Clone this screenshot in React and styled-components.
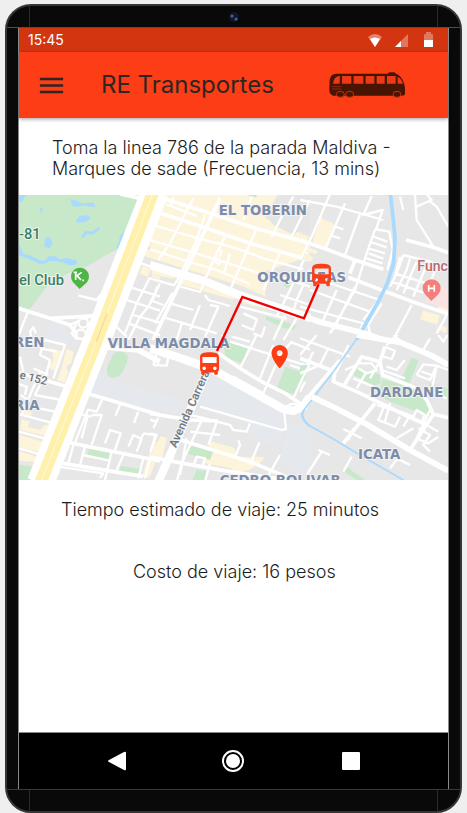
import React from "react";
import styled, { createGlobalStyle } from "styled-components";
import { MdMenu } from "react-icons/md";

const GlobalStyle = createGlobalStyle`
  *, *::before, *::after { box-sizing: border-box; }
  body {
    margin: 0;
    background: #efefef;
    color: #1c1c1c;
    font-family: Inter, "Liberation Sans", sans-serif;
  }
`;

const Phone = styled.div`
  display: flex;
  flex-direction: column;
  min-height: calc(100vh - 4px);
  margin: 4px 5px 0;
  overflow: hidden;
  background: #090909;
  border: 2px solid #363636;
  border-radius: 26px;
`;

const Bezel = styled.div`
  display: grid;
  grid-template-columns: 22px 1fr 22px;
  height: 22px;
  border-${(p) => p.$edge}: 1px solid ${(p) => p.$line};
`;

const BezelCell = styled.div`
  display: flex;
  align-items: center;
  justify-content: center;
  border: 0 solid #2b2b2b;
  border-width: ${(p) => (p.$middle ? "0 1px" : "0")};
`;

const Camera = styled.svg`
  width: 10px;
  height: 10px;
`;

const Screen = styled.div`
  display: flex;
  flex: 1;
  flex-direction: column;
  margin: 0 11px;
  background: #fff;
  border: 0 solid #8a8a8a;
  border-width: 0 1px;
`;

const StatusBar = styled.div`
  display: flex;
  align-items: center;
  justify-content: space-between;
  height: 24px;
  padding: 0 14px 0 9px;
  background: #d43511;
  color: #fff;
  font-size: 14px;
  line-height: 24px;
`;

const StatusIcons = styled.svg`
  width: 68px;
  height: 16px;
`;

const AppBar = styled.header`
  display: flex;
  align-items: center;
  height: 66px;
  padding: 0 43px 0 17px;
  background: #fc3d15;
  box-shadow: 0 1px 4px rgba(0, 0, 0, 0.4);
`;

const MenuButton = styled.button`
  display: flex;
  padding: 0;
  border: 0;
  background: none;
  color: #2f2522;
  font-size: 31px;
`;

const Title = styled.h1`
  flex: 1;
  margin: 0 0 0 34px;
  color: #2c2624;
  font-size: 24px;
  font-weight: 400;
  line-height: 32px;
  white-space: nowrap;
`;

const BusLogo = styled.svg`
  width: 76px;
  height: 26px;
`;

const Content = styled.main`
  flex: 1;
  padding-top: 19px;
`;

const Line = styled.p`
  margin: 0;
  padding: ${(p) => p.$pad};
  font-size: 18px;
  font-weight: 300;
  line-height: 21px;
`;

const Map = styled.svg`
  display: block;
  width: 100%;
  height: auto;
  margin: 16px 0 19px;
  background: #e7e7e7;
`;

const MapLabel = styled.text`
  fill: ${(p) => p.$color || "#7c8ca9"};
  stroke: #f3f3f3;
  stroke-width: 6px;
  stroke-linejoin: round;
  paint-order: stroke;
  font-family: ${(p) => (p.$plain ? "Roboto" : '"DejaVu Sans"')}, sans-serif;
  font-size: ${(p) => p.$size || 40}px;
  font-weight: ${(p) => (p.$plain ? 500 : 700)};
`;

const NavBar = styled.nav`
  display: grid;
  grid-template-columns: repeat(3, 1fr);
  align-items: center;
  height: 57px;
  padding: 0 38px;
  background: #000;
  border-top: 1px solid #8a8a8a;
`;

const NavButton = styled.button`
  display: flex;
  justify-content: center;
  padding: 0;
  border: 0;
  background: none;
`;

const NavIcon = styled.svg`
  width: 24px;
  height: 24px;
  fill: #fff;
`;

const BUS =
  "M4 16c0 .88.39 1.67 1 2.22V20c0 .55.45 1 1 1h1c.55 0 1-.45 1-1v-1h8v1c0 .55.45 1 1 1h1c.55 0 1-.45 1-1v-1.78c.61-.55 1-1.34 1-2.22V6c0-3.5-3.58-4-8-4s-8 .5-8 4v10zm3.5 1c-.83 0-1.5-.67-1.5-1.5S6.67 14 7.5 14s1.5.67 1.5 1.5S8.33 17 7.5 17zm9 0c-.83 0-1.5-.67-1.5-1.5s.67-1.5 1.5-1.5 1.5.67 1.5 1.5-.67 1.5-1.5 1.5zm1.5-6H6V6h12v5z";
const PIN =
  "M12 2C8.13 2 5 5.13 5 9c0 5.25 7 13 7 13s7-7.75 7-13c0-3.87-3.13-7-7-7zm0 9.5c-1.38 0-2.5-1.12-2.5-2.5s1.12-2.5 2.5-2.5 2.5 1.12 2.5 2.5-1.12 2.5-2.5 2.5z";

/* Map sections: origin of each section plus its coloured areas and streets. */
const sections = [
  {
    x: -57,
    y: -15,
    green: "M50 10H360L414 30L354 176L255 232L205 250L180 265L140 290L90 358L50 350Z",
    sand:
      "M475 70L465 96L480 104V70ZM458 108L449 134L480 146V114ZM442 146L434 166L480 182V155ZM432 174L424 195L468 210L476 188ZM428 226L418 252L444 262L452 236ZM462 236L454 260L480 270V240Z",
    slate: "M140 395L180 400L225 440L228 460H135Z",
    water:
      "M212 26L228 32L245 40L280 38L286 50L268 50L256 46L234 50L216 48ZM228 92L238 78L266 76L272 86L256 96L232 98ZM243 140L254 124L276 124L298 110L300 118L278 134L262 132L250 144ZM138 142L150 142L158 160L148 176L132 168ZM120 54L126 52L128 66L122 68ZM56 14H80L72 24L64 38L56 32ZM56 160L62 172L70 192L90 196L118 210L135 212L144 200L164 198L180 208L198 204L214 208L228 210L232 218L222 226L204 226L192 218L168 214L148 212L140 220L118 222L90 208L70 200L56 196ZM374 124L360 138L356 158L348 172L356 174L366 152L374 138Z",
    major: "M360 12L425 26M55 355L150 385L210 405L240 445M150 385L310 376",
    minor:
      "M235 316L290 330L304 312M84 365L62 420L50 450M95 450L90 425L100 412L108 430M270 380L205 406M410 215L480 240M385 290L480 320M365 325L480 362M400 375L480 398M385 400L480 436M450 262L410 340L375 430M480 280L445 350L420 380L385 450M344 405L380 440M230 400L215 430L235 452",
  },
  {
    x: 393,
    y: -15,
    sand:
      "M35 10H385L345 84L480 140V200L345 245L350 290L345 320L280 290L0 205V150L0 130ZM5 235L80 252L75 268L5 254ZM82 262L158 286L150 300L78 280ZM160 288L255 316L252 330L156 304ZM290 316L350 335L345 356L280 340Z",
    green: "M290 10L322 14L318 22L298 18ZM345 378L440 406L430 420L395 412L375 402L348 390ZM405 270L425 290L412 294L400 284Z",
    gray: "M392 10H480V128L448 120L432 136L372 106L352 84Z",
    wide: "M0 225L90 252L160 272L275 318L480 384",
    major: "M30 65L0 130M210 25L0 470M25 22L170 66L320 116L480 160M20 65L150 108L300 160L480 210",
    minor:
      "M10 105L120 138L260 175L340 205L460 238M0 150L110 182L220 215L330 250L345 248M0 178L100 210L200 240L300 282M70 22L62 50M50 44L140 78M130 25L112 60M115 52L95 92L60 160L25 210M165 75L140 150L105 225L82 270M230 130L200 190L160 280M320 115L240 300M305 20L280 90M430 20L395 80L365 140M480 30L425 140M390 190L340 300M480 170L420 300L380 380M480 240L440 330L425 380M210 200L214 184L204 176M205 205A8 8 0 1 0 212 216M240 190L222 248M0 265L72 286L82 270M92 290L150 306L160 285M165 315L175 330L240 348M22 290L10 325L0 340M68 308L15 400M150 345L120 420M180 345L205 350L165 440M60 340L130 360M35 380L200 430M95 400L80 450M270 350L410 386M280 370L320 388L310 420L275 405M345 410L335 440L310 430M405 375L370 450M440 385L400 450M390 315L480 345M370 255L480 290M0 330L40 345",
  },
  {
    x: 843,
    y: -15,
    sand: "M0 130L26 138L20 158L0 150ZM62 78L74 90L100 98L102 112L78 174L40 160L38 150ZM20 170L54 182L48 194L18 184ZM8 190L40 200L34 215L5 205ZM368 360L420 376L412 405L360 388ZM418 340L445 348V370L412 358ZM420 405L440 412V430L415 420Z",
    slate: "M80 70L104 80L100 108L76 98Z",
    rose: "M398 286L445 296V358L398 342L375 335Z",
    wide: "M0 375L60 396L200 432L300 468",
    major: "M145 262L258 305L350 340L445 372M0 150L80 178L165 210L250 238M318 150L400 172L445 188M165 210L150 250",
    minor:
      "M0 30L110 50L250 90M90 12L35 140L0 210M135 40L75 180M180 72L135 195M215 18L190 75L248 60L228 118L268 125L278 180L262 240M225 118L200 190L165 300L90 430M205 175L255 190M210 155L260 172M215 138L262 155M206 190L250 206M200 205L248 220M345 15L350 90L400 170M350 50L395 30L380 12M385 30L410 50L445 110M310 195L390 215L445 238M300 200L285 260L270 290M310 195L290 250M330 205L320 240L290 300M350 215L330 260L310 310M380 225L340 320M410 232L380 300M285 250L410 290M275 275L370 308M60 270L240 330L256 300M30 300L210 365M0 350L190 400L180 420M110 300L70 390M165 290L100 420M240 325L190 390M335 345L290 430L280 450M205 405L245 340M210 430L205 405M440 375L410 430M100 108L130 118M90 135L120 145M300 20L310 60",
    blue: "M271 10L280 90L285 145L281 220L262 280L240 325L170 450",
  },
  {
    x: -57,
    y: 420,
    green: "M340 56C350 45 390 48 383 75C376 100 360 132 338 128C320 126 316 108 324 90ZM268 342L328 354L325 376L260 362ZM362 392L424 403L418 424L357 414ZM55 388L103 396L96 436H50Z",
    sand: "M155 38L190 50L170 110L145 100L145 85L158 80ZM200 40L222 50L215 85L200 95L205 110L195 145L170 136L180 110ZM64 252L90 258L84 275L120 284L134 268L148 270L138 304L60 285ZM57 298L130 320L118 352L57 338ZM57 348L112 364L108 382L57 378ZM466 318L480 322V372L448 362ZM440 376L468 380L448 430L426 424ZM75 225L98 232L92 245L70 238ZM132 115L160 140L136 135Z",
    slate: "M135 10L190 -10L225 40L160 15ZM290 118L480 178V240L258 170Z",
    wide: "M310 35L415 45L480 80",
    major: "M60 114L205 156M258 174L480 240M204 322L480 378M170 382L430 424",
    minor:
      "M55 30L80 20L135 15L195 30L160 130M120 40L170 50M60 65L70 110M130 20L120 60L150 75L135 130M225 70L240 80M50 145L80 155L75 180M120 110L65 240M120 150L105 180L185 195M92 215L165 230M60 238L150 262M57 290L140 312M57 340L120 358M308 190L290 230L264 224L226 320M264 240L245 310M232 235L275 245M275 240L305 240L275 330M360 210L346 242M415 230L402 264M475 248L460 280M315 325L330 285L362 295L345 345M385 335L400 300L425 312L410 350M430 295L465 300L450 370M430 295L420 320M220 330L205 385M255 335L240 390M335 350L315 435M370 360L350 405M430 370L415 430M250 360L325 376M175 395L310 415L300 428M450 370L435 430M100 100L145 120M62 180L90 200",
  },
  {
    x: 393,
    y: 420,
    green: "M222 20L294 34L278 85L225 68ZM406 95L455 112L474 84L465 130L430 178L380 160ZM115 330L190 350L180 375L108 355ZM140 404L170 408L160 440H126Z",
    sand: "M32 302L52 308L36 378L0 362ZM182 318L254 338L260 365L345 366L330 385L300 405L260 415L240 400L160 385ZM60 360L76 364L68 382L55 378Z",
    slate: "M0 168L100 195L80 238L0 210ZM190 115L230 130L330 180L400 225L410 288L200 230L145 210ZM305 265L400 290L375 330L295 305ZM420 258L480 280V400L440 418L385 380Z",
    wide: "M0 40L70 62L150 90L200 110L270 150L400 222L430 228L460 215L480 185M178 95L25 440",
    major: "M205 55L270 100L335 140L400 172L458 210M0 235L120 255L205 258M75 310L210 352L300 380L420 430M0 366L100 385L240 410L410 435",
    minor:
      "M150 215L395 285L408 282L402 225M105 235L240 270L250 285L290 290L300 265M160 245L130 310L95 385L80 440M200 262L175 330M120 290L210 300M0 295L20 300L0 350M20 260L0 254M265 316L270 330L255 365M328 322L300 390M390 360L350 430M130 395L140 365L165 370L155 400M110 310L90 420M180 385L165 440M235 130L250 125L340 175L390 60L425 20M370 30L330 130M300 20L245 5M420 20L480 44M420 90L450 100M480 80L430 190M320 0L290 60L270 100M240 20L480 95M410 215C430 198 450 210 440 218M10 90L50 92L55 65M10 90L18 60M215 0L230 15",
    blue: "M480 208C450 230 450 245 480 275",
  },
  {
    x: 843,
    y: 420,
    green: "M168 100L240 118L242 145L222 152L158 118ZM335 68L356 76L328 145L302 134ZM248 132L330 155L372 175L395 242L340 225L280 205L235 180ZM0 92L25 88L10 118L0 122ZM140 395L195 435H170L126 406ZM385 145L442 160V190L400 180Z",
    slate: "M0 285L44 305L0 378Z",
    wide: "M170 0L300 22L395 62L445 90M35 185L105 218L200 268L330 345L445 408",
    major: "M0 70L105 110L100 140L175 172L290 228L380 270M240 80L248 120L350 160L380 195L400 238L445 248M130 155L185 65L240 80L255 35M400 238L330 345M225 205L130 325M0 215L120 75",
    minor:
      "M0 10L150 65M50 0L0 60M85 40L60 90M40 50L20 90M145 30L110 110M255 35L285 48L275 72L250 65M260 95L290 105L315 75M245 105L315 130M240 78L210 130M170 85L215 85L230 105L200 115L175 100M135 105L170 90M160 130L220 155L210 180M170 160L200 110M350 120L390 135L410 92L370 88L350 120M410 92L445 105M410 92L395 165L380 175M365 110L395 120M230 210L330 240L310 275M250 220L235 255L285 275L300 245M270 205L255 260M300 230L340 245L350 225L375 240L365 260M340 280L290 310M355 280L390 300L370 330L390 350M380 270L415 290M395 215L350 310L385 325L415 305M440 190L395 170M130 282L185 310M160 280L145 315M300 360L270 400M55 345L90 360M65 350L20 420M155 365L130 410M290 370L330 390M0 115L50 95M15 140L0 170M305 20L280 0M390 10L370 45M415 0L430 20L442 0M260 30L300 -10",
    blue: "M175 5L100 110L8 230Q0 250 25 270L100 312L180 360L310 435",
  },
];

const labels = [
  { text: "EL TOBERIN", x: 599, y: 61 },
  { text: "ORQUIDEAS", x: 715, y: 262 },
  { text: "VILLA MAGDALA", x: 266, y: 460 },
  { text: "REN", x: -15, y: 456 },
  { text: "RIA", x: -15, y: 645 },
  { text: "DARDANE", x: 1053, y: 607 },
  { text: "ICATA", x: 1017, y: 792 },
  { text: "CEDRO BOLIVAR", x: 602, y: 870 },
];

function RouteMap() {
  return (
    <Map viewBox="0 0 1287 855" role="img" aria-label="Mapa de la ruta">
      {sections.map((s, i) => (
        <svg key={i} x={s.x} y={s.y} width={i % 3 === 2 ? 501 : 482} height="450" overflow="hidden">
          <path d={s.slate} fill="#e5e9ed" />
          <path d={s.sand} fill="#fdf4dc" stroke="#efe9d8" strokeWidth="2" />
          <path d={s.green} fill="#c8e9c9" />
          <path d={s.gray} fill="#e5e5e5" />
          <path d={s.rose} fill="#fbe3e3" />
          <path d={s.water} fill="#a8d9ff" />
          <g fill="none" stroke="#fff" strokeLinejoin="round">
            <path d={s.minor} strokeWidth="7" />
            <path d={s.major} strokeWidth="11" />
          </g>
          <path d={s.blue} fill="none" stroke="#a8d9ff" strokeWidth={s.y < 0 ? 11 : 5} />
          <path d={s.wide} fill="none" stroke="#fff" strokeWidth={i === 1 || i === 4 ? 25 : 17} />
        </svg>
      ))}
      <g fill="none">
        <path d="M408 -10L238 425L64 865" stroke="#fff" strokeWidth="82" />
        <path d="M403 -10L238 425L64 865" stroke="#fff0ac" strokeWidth="37" />
        <path d="M403 -10L238 425L64 865" stroke="#fff9dc" strokeWidth="3" />
        <path d="M264 356L232 440" stroke="#f2b96a" strokeWidth="2" />
      </g>
      <g fill="none" stroke="#fff" strokeWidth="7">
        <circle cx="193" cy="384" r="14" fill="#e7e7e7" />
        <circle cx="186" cy="418" r="14" fill="#e7e7e7" />
      </g>
      {labels.map((l) => (
        <MapLabel key={l.text} x={l.x} y={l.y}>{l.text}</MapLabel>
      ))}
      <MapLabel $plain $color="#3a8262" $size={44} x="0" y="131">-81</MapLabel>
      <MapLabel $plain $color="#3a8262" $size={44} x="0" y="269">el Club</MapLabel>
      <MapLabel $plain $color="#b86a70" $size={42} x="1195" y="229">Func</MapLabel>
      <MapLabel $plain $color="#6d7680" $size={34} transform="translate(0 550) rotate(14)">e 152</MapLabel>
      <MapLabel $plain $color="#6d7680" $size={35} transform="translate(471 760) rotate(-66)">Avenida Carrera 1</MapLabel>

      <path d="M182 282L162 262A27 27 0 1 1 204 262Z" fill="#4db645" />
      <path d="M170 232V255M188 232L174 242L186 255M164 232H174M190 256H195" fill="none" stroke="#fff" strokeWidth="5" />
      <path d="M1237 318L1218 298A27 27 0 1 1 1258 298Z" fill="#f67e7c" />
      <path d="M1229 270V290M1246 270V290M1229 280H1246" fill="none" stroke="#fff" strokeWidth="5" />

      <path d="M594 468L670 306L855 370L899 268" fill="none" stroke="#f00000" strokeWidth="7" />
      <path d="M548 484H596V506H548Z" fill="#fff" />
      <g fill="#fc3d15">
        <path d={BUS} transform="translate(865 199) scale(3.55)" />
        <path d={BUS} transform="translate(529 465) scale(3.55)" />
        <path d={PIN} transform="translate(740 443) scale(3.5)" />
      </g>
    </Map>
  );
}

export default function App() {
  return (
    <>
      <GlobalStyle />
      <Phone>
        <Bezel $edge="bottom" $line="#4d4d4d">
          <BezelCell />
          <BezelCell $middle>
            <Camera viewBox="0 0 10 10">
              <circle cx="5" cy="5" r="5" fill="#101827" />
              <circle cx="3" cy="4" r="1.5" fill="#6258a8" />
              <circle cx="7" cy="7" r="1.5" fill="#316b9d" />
            </Camera>
          </BezelCell>
          <BezelCell />
        </Bezel>
        <Screen>
          <StatusBar>
            <span>15:45</span>
            <StatusIcons viewBox="0 0 68 16" aria-hidden="true">
              <path d="M2 5Q9 -1 16 5L9 15Z" fill="#e7836c" />
              <path d="M4 7Q9 4 14 7L9 15Z" fill="#fff" />
              <path d="M29 15L42 2V15Z" fill="#e3765e" />
              <path d="M29 15L35 9V15Z" fill="#fff" />
              <path d="M58 3Q58 2 59 2H60V0H65V2H66Q67 2 67 3V9H58Z" fill="#e3765e" />
              <path d="M58 8H67V15H58Z" fill="#fff" />
            </StatusIcons>
          </StatusBar>
          <AppBar>
            <MenuButton type="button" aria-label="Menú"><MdMenu /></MenuButton>
            <Title>RE Transportes</Title>
            <BusLogo viewBox="0 0 228 78" role="img" aria-label="Autobús">
              <path d="M2 24Q4 6 22 5H176L181 1H196L201 5Q217 10 225 34L228 47V66Q227 71 219 71H12Q1 67 1 54Z" fill="#481403" />
              <path d="M12 35Q14 12 33 12L32 35ZM39 12H67V35H39ZM74 12H103V35H74ZM110 12H136V35H110ZM143 12H167V35H143ZM174 12H200V35H174ZM206 14Q218 20 222 35H206Z" fill="#ed3914" />
              <path d="M10 44H37M10 51H37" stroke="#98270f" strokeWidth="3" />
              <g fill="#481403" stroke="#c93011" strokeWidth="3">
                <ellipse cx="34" cy="67" rx="12" ry="9" />
                <ellipse cx="62" cy="67" rx="12" ry="9" />
                <ellipse cx="204" cy="67" rx="12" ry="9" />
              </g>
            </BusLogo>
          </AppBar>
          <Content>
            <Line $pad="0 40px 0 33px">
              Toma la linea 786 de la parada Maldiva - Marques de sade (Frecuencia, 13 mins)
            </Line>
            <RouteMap />
            <Line $pad="0 42px">Tiempo estimado de viaje: 25 minutos</Line>
            <Line $pad="41px 42px 0 114px">Costo de viaje: 16 pesos</Line>
          </Content>
          <NavBar>
            <NavButton type="button" aria-label="Atrás">
              <NavIcon viewBox="0 0 24 24"><path d="M5 11L20 3Q22 2 22 4V20Q22 22 20 21L5 13Q3 12 5 11Z" /></NavIcon>
            </NavButton>
            <NavButton type="button" aria-label="Inicio">
              <NavIcon viewBox="0 0 24 24">
                <circle cx="12" cy="12" r="10" fill="none" stroke="#fff" strokeWidth="2" />
                <circle cx="12" cy="12" r="7" />
              </NavIcon>
            </NavButton>
            <NavButton type="button" aria-label="Recientes">
              <NavIcon viewBox="0 0 24 24"><rect x="3" y="3" width="18" height="18" rx="1" /></NavIcon>
            </NavButton>
          </NavBar>
        </Screen>
        <Bezel $edge="top" $line="#3a3a3a">
          <BezelCell />
          <BezelCell $middle />
          <BezelCell />
        </Bezel>
      </Phone>
    </>
  );
}
